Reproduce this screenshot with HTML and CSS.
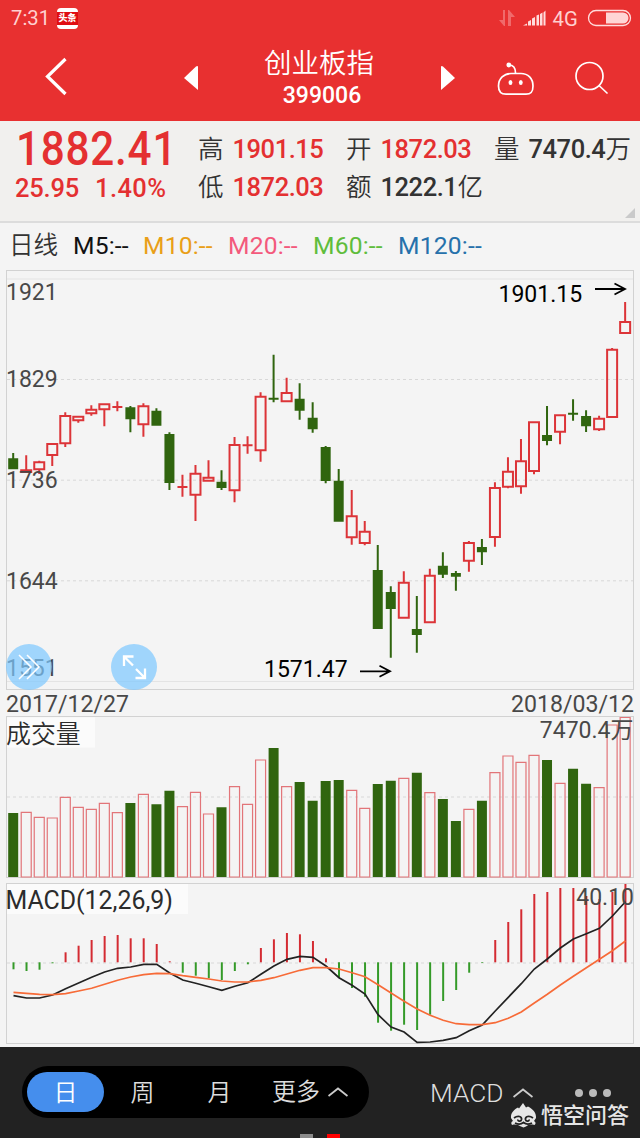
FILE: index.html
```html
<!DOCTYPE html>
<html lang="zh-CN">

<head>
    <meta charset="UTF-8">
    <meta name="viewport" content="width=device-width, initial-scale=1.0">
    <link rel="stylesheet" href="styles.css">
    <title>创业板指 399006</title>
</head>

<body>
    <div class="status">
        <span class="time">7:31</span>
        <span class="toutiao">头条</span>
        <svg class="status-icons" width="142" height="36" viewBox="498 0 142 36">
            <g fill="#f06a6b">
                <path d="M503 10h2v16h-1l-5-6h4zM508 26V10h1l6 7h-4v9z" />
            </g>
            <path fill="#ffdcdc" d="M523 25.500l4-2v2zM528 25.500v-4l3-1.500v5.500zM532 25.500v-7l3-1.500v8.500zM536.500 25.500v-10l2.500-1v11zM540 25.500V14l2.500-1.500v13zM543.500 25.500v-13l2-2v15z" />
            <text x="552.500" y="25.500">4G</text>
            <rect x="588.500" y="10.500" width="42" height="15" rx="7.500" fill="none" stroke="#ffdcdc" stroke-width="1.300" />
            <path fill="#ffd5d5" d="M606 12.500h17a5.500 5.500 0 0 1 0 11h-17z" />
        </svg>
    </div>

    <div class="header">
        <svg class="back" width="24" height="40" viewBox="44 57 24 40">
            <path d="M65.500 59L47.500 76.500L65.500 94" fill="none" stroke="#fff" stroke-width="3.200" />
        </svg>
        <svg class="prev" width="15" height="26" viewBox="0 0 15 26">
            <path d="M0 13L12 1.500Q14 .5 14 2V25Z" fill="#fff" />
        </svg>
        <div class="title">
            <p class="name">创业板指</p>
            <p class="code">399006</p>
        </div>
        <svg class="next" width="15" height="26" viewBox="0 0 15 26">
            <path d="M15 13L3 1.500Q1 .5 1 2V25Z" fill="#fff" />
        </svg>
        <svg class="robot" width="38" height="36" viewBox="496 61 38 36">
            <g fill="none" stroke="#fff" stroke-width="1.700">
                <path d="M509 65C514 65 515.500 68 515.500 73" />
                <path d="M511 73.500h10c7 0 12 5 12 12.500c0 6-2 8.200-7 8.200h-20c-5 0-7.500-2.200-7.500-8.200c0-7.500 5.500-12.500 12.500-12.500z" />
            </g>
            <g fill="#fff">
                <circle cx="508.800" cy="65" r="2.400" />
                <ellipse cx="510.500" cy="82.500" rx="1.900" ry="2.600" />
                <ellipse cx="520.800" cy="82.500" rx="1.900" ry="2.600" />
            </g>
        </svg>
        <svg class="search" width="36" height="36" viewBox="574 60 36 36">
            <g fill="none" stroke="#fff" stroke-width="1.700">
                <circle cx="589.500" cy="76" r="13.500" />
                <path d="M599 85.500L607.500 93.500" />
            </g>
        </svg>
    </div>

    <div class="quote">
        <div class="price">
            <p class="now">1882.41</p>
            <p class="change"><span>25.95</span><span>1.40%</span></p>
        </div>
        <div class="cell">高<b class="up">1901.15</b></div>
        <div class="cell">开<b class="up">1872.03</b></div>
        <div class="cell">量<b>7470.4</b>万</div>
        <div class="cell">低<b class="up">1872.03</b></div>
        <div class="cell">额<b>1222.1</b>亿</div>
        <i class="corner"></i>
    </div>

    <div class="ma">
        <span class="cycle">日线</span>
        <span class="m5">M5:--</span>
        <span class="m10">M10:--</span>
        <span class="m20">M20:--</span>
        <span class="m60">M60:--</span>
        <span class="m120">M120:--</span>
    </div>

    <div class="kline">
        <svg width="640" height="420" viewBox="0 270 640 420">
            <rect class="frame" x="6.500" y="270.500" width="627" height="419" />
            <path class="inner" d="M7 279H633M7 681.500H633" />
            <path class="dots" d="M7 379.500H633M7 480.200H633M7 580.800H633" />
            <g id="candles"></g>
            <g class="label">
                <text x="6" y="300">1921</text>
                <text x="6" y="387">1829</text>
                <text x="6" y="488">1736</text>
                <text x="6" y="589">1644</text>
                <text x="6" y="676">1551</text>
            </g>
            <g class="peak">
                <text x="498.500" y="302">1901.15</text>
                <text x="264" y="677">1571.47</text>
            </g>
            <path class="arrow" d="M595 289H625M614.500 283.500L625 289L614.500 294.500M360 671.300H390M379.500 665.800L390 671.300L379.500 676.800" />
        </svg>
        <a class="float expand">
            <svg width="46" height="46" viewBox="0 0 46 46">
                <path d="M13 11L25 23L13 35M21 11L33 23L21 35" />
            </svg>
        </a>
        <a class="float full">
            <svg width="46" height="46" viewBox="0 0 46 46">
                <path d="M22 21.500L13 12.500M13 22V12.500H22.500M25 25L34 34M24.500 34H34V24.500" />
            </svg>
        </a>
    </div>

    <div class="dates">
        <span>2017/12/27</span>
        <span>2018/03/12</span>
    </div>

    <svg class="volume" width="640" height="162" viewBox="0 716 640 162">
        <rect class="frame" x="6.500" y="716.500" width="627" height="161" />
        <rect class="tag" x="7" y="717.500" width="88" height="30" />
        <path class="dots" d="M7 797H633" />
        <g id="volumes"></g>
        <text class="name" x="6" y="743">成交量</text>
        <text class="label" x="633.500" y="738" text-anchor="end">7470.4万</text>
    </svg>

    <svg class="macd" width="640" height="162" viewBox="0 883 640 162">
        <rect class="frame" x="6.500" y="883.500" width="627" height="160" />
        <rect class="tag" x="7" y="884" width="181" height="30" />
        <path class="dots" d="M7 963H633" />
        <g id="macds"></g>
        <path id="dif" />
        <path id="dea" />
        <text class="name" x="5.500" y="909">MACD(12,26,9)</text>
        <text class="label" x="634" y="905" text-anchor="end">40.10</text>
    </svg>

    <div class="footer">
        <ul class="tabs">
            <li class="active">日</li>
            <li>周</li>
            <li>月</li>
            <li class="more">更多
                <svg width="20" height="10" viewBox="0 0 20 10">
                    <path d="M.5 9L10 1.500L19.500 9" />
                </svg>
            </li>
        </ul>
        <div class="index">MACD
            <svg width="20" height="10" viewBox="0 0 20 10">
                <path d="M.5 9L10 1.500L19.500 9" />
            </svg>
        </div>
        <div class="menu"><i></i><i></i><i></i></div>
        <div class="pager"><i></i><i class="on"></i></div>
        <div class="wukong">
            <svg width="27" height="25" viewBox="0 0 27 25">
                <path fill="#e6e6e6" d="M1 15C.5 10 4 6.500 8 4.500L9 5.500L13 0L16 4.500L18 3.500C23 6 26.500 10 26 15L24 18C26 19 26 21 24.500 22C20 21 18 22 16 23.500L13.500 24.500L11 23.500C8 22 6 21 2 22C.5 20 1.500 18.500 3 18Z" />
                <path fill="none" stroke="#222" stroke-width="1.300" d="M4 15C8 12 12 13.500 11.500 16.500C11 19 7.500 18.500 8 16.500M23 15C19 12 15 13.500 15.500 16.500C16 19 19.500 18.500 19 16.500M5 20C8 21.500 11 21.500 13.500 19.500C16 21.500 19 21.500 22 20" />
            </svg>
            <span>悟空问答</span>
        </div>
    </div>
    <script src="chart.js"></script>
</body>

</html>
```
FILE: styles.css
```css
* {
    margin: 0;
    padding: 0;
    box-sizing: border-box;
}

body {
    width: 640px;
    height: 1138px;
    overflow: hidden;
    background-color: #f4f4f4;
    font-family: Roboto, "Noto Sans CJK SC", sans-serif;
    color: #333;
}

ul {
    list-style: none;
}

i {
    display: block;
}

svg {
    display: block;
    flex: none;
}

.status {
    display: flex;
    align-items: center;
    height: 36px;
    padding-left: 11px;
    background-color: #e83030;
    color: #ffd0d0;
}

.time {
    width: 46px;
    font-size: 20.3px;
}

.toutiao {
    width: 21px;
    height: 21px;
    border: solid #fff;
    border-width: 4px 0;
    border-radius: 4px;
    background-color: #e00d12;
    color: #fff;
    font-size: 9px;
    font-weight: 900;
    line-height: 13px;
    text-align: center;
}

.status-icons {
    margin-left: auto;
}

.status-icons text {
    font-size: 20.3px;
    fill: #ffd0d0;
}

.header {
    display: flex;
    height: 85px;
    background-color: #e83030;
    color: #fff;
}

.back {
    margin: 21px 0 0 44px;
}

.prev {
    margin: 29px 0 0 116px;
}

.title {
    width: 236px;
    text-align: center;
}

.title .name {
    height: 42px;
    padding: 8px 0 0 4px;
    font-size: 27.5px;
    font-weight: 350;
    line-height: 40px;
}

.code {
    padding-left: 10px;
    font-size: 23px;
    font-weight: 500;
    line-height: 36px;
}

.next {
    margin: 29px 0 0 5px;
}

.robot {
    margin: 25px 0 0 41px;
}

.search {
    margin: 24px 0 0 40px;
}

.quote {
    position: relative;
    display: grid;
    grid-template-columns: 183px 148px 148px 1fr;
    grid-template-rows: 38px 38px;
    height: 102px;
    padding: 9px 0 0 15px;
    border-bottom: 2px solid #dcdcdc;
    background-color: #f1f0ee;
}

.price {
    grid-row: 1 / 3;
    color: #e43031;
    font-weight: 500;
}

.now {
    height: 39px;
    padding-left: 1px;
    font-size: 48px;
    letter-spacing: .9px;
    line-height: 38px;
    transform: scaleX(.88);
    transform-origin: left;
}

.change {
    display: flex;
    gap: 16px;
    font-size: 25.5px;
    letter-spacing: -.2px;
    line-height: 39px;
}

.change span + span {
    letter-spacing: .4px;
}

.cell {
    display: flex;
    font-size: 25.5px;
    font-weight: 350;
    line-height: 38px;
    white-space: nowrap;
}

.cell b {
    margin-left: 9px;
    font-weight: 500;
    letter-spacing: -.45px;
}

.cell .up {
    color: #e43031;
}

.corner {
    position: absolute;
    right: 5px;
    bottom: 3px;
    border-left: 10px solid transparent;
    border-bottom: 10px solid #cacaca;
}

.ma {
    display: flex;
    height: 47px;
    padding-left: 9px;
    font-size: 24.6px;
    line-height: 46px;
}

.cycle {
    width: 64px;
    font-weight: 350;
}

.m5 {
    width: 70px;
    color: #111;
    letter-spacing: .2px;
}

.m10 {
    width: 85px;
    color: #e99f18;
    letter-spacing: .2px;
}

.m20 {
    width: 85px;
    color: #f3597c;
    letter-spacing: .2px;
}

.m60 {
    width: 85px;
    color: #5fbd3c;
    letter-spacing: .2px;
}

.m120 {
    color: #2671ab;
    letter-spacing: .2px;
}

.kline {
    position: relative;
    height: 420px;
}

.frame {
    fill: none;
    stroke: #d2d2d2;
}

.inner {
    stroke: #e4e4e4;
}

.dots {
    stroke: #d8d8d8;
    stroke-dasharray: 3 3;
}

.tag {
    fill: #fbfbfb;
}

.label {
    font-size: 23px;
    fill: #484848;
}

.volume .name,
.macd .name {
    font-size: 24.9px;
    fill: #2c2c2c;
}

.volume .name {
    font-weight: 350;
}

.peak {
    font-size: 23px;
    fill: #000;
}

.arrow {
    fill: none;
    stroke: #000;
    stroke-width: 1.8;
}

.rise {
    fill: none;
    stroke: #dc3438;
    stroke-width: 2;
}

.fall {
    fill: #30650f;
    stroke: #30650f;
    stroke-width: 2;
}

#volumes .rise {
    stroke: #e27579;
    stroke-width: 1.2;
}

#macds .rise {
    stroke: #d42b32;
}

#macds .fall {
    stroke: #349a28;
}

#dif,
#dea {
    fill: none;
    stroke: #222;
    stroke-width: 1.7;
}

#dea {
    stroke: #f76b38;
}

.float {
    position: absolute;
    top: 374px;
    width: 46px;
    height: 46px;
    border-radius: 50%;
    background-color: rgba(124, 200, 255, .7);
}

.float path {
    fill: none;
    stroke: #fff;
    stroke-width: 2.3;
}

.expand {
    left: 6px;
}

.expand path {
    stroke-width: 1.5;
}

.full {
    left: 111px;
}

.dates {
    display: flex;
    justify-content: space-between;
    height: 26px;
    padding: 0 6px;
    color: #484848;
    font-size: 23.1px;
    line-height: 29px;
}

.macd {
    margin-top: 5px;
}

.footer {
    position: relative;
    display: flex;
    height: 93px;
    margin-top: 2px;
    padding: 19px 0 0 22px;
    background-color: #222;
    color: #ddd;
    font-size: 24px;
    font-weight: 350;
}

.footer path {
    stroke-width: 1.8;
}

.tabs {
    display: flex;
    width: 347px;
    height: 52px;
    padding: 6px 5px;
    border-radius: 26px;
    background-color: #000;
    line-height: 42px;
}

.tabs li {
    width: 77px;
    text-align: center;
}

.tabs .active {
    border-radius: 20px;
    background-color: #458eed;
    color: #fff;
}

.tabs .more {
    display: flex;
    align-items: center;
    gap: 8px;
    width: 90px;
    padding-left: 14px;
    white-space: nowrap;
}

.more path,
.index path {
    fill: none;
    stroke: #ccc;
}

.index {
    display: flex;
    align-items: center;
    gap: 9px;
    width: 145px;
    height: 54px;
    margin-left: 61px;
    font-size: 26.3px;
}

.menu {
    display: flex;
    gap: 6px;
    margin: 23px 0 0 0;
}

.menu i {
    width: 8px;
    height: 8px;
    border-radius: 50%;
    background-color: #bbb;
}

.pager {
    position: absolute;
    left: 300px;
    bottom: 0;
    display: flex;
    gap: 14px;
}

.pager i {
    width: 13px;
    height: 6px;
    background-color: #8b8b8b;
}

.pager .on {
    background-color: #f00;
}

.wukong {
    position: absolute;
    right: 11px;
    bottom: 9px;
    display: flex;
    align-items: center;
    gap: 4px;
    color: #e6e6e6;
    font-size: 22px;
    font-weight: 500;
    line-height: 30px;
}

.wukong svg {
    margin-bottom: 2px;
}
```
FILE: chart.js
```js
// [涨跌, 最高, 实体上沿, 实体下沿, 最低, 成交量柱顶, MACD柱端, DIF, DEA]
const data = [
    [0, 453, 458.3, 469.3, 469.3, 813, 969.3, 995.7, 992.3],
    [1, 455.3, 470.3, 472, 472, 812.3, 971, 998, 993.3],
    [1, 460.7, 462.3, 469.3, 474, 817.3, 969.7, 998, 994.3],
    [1, 444, 444, 455, 466, 818, 963.3, 995, 994.7],
    [1, 412.3, 416, 443.3, 447, 797.3, 952.3, 988.7, 993.7],
    [1, 416.7, 416.7, 420.3, 422.7, 807.3, 945.7, 983, 991],
    [1, 405.3, 409.7, 413.3, 415.7, 809.3, 940, 977.3, 988.3],
    [1, 404.3, 404.3, 409.3, 426.3, 803.3, 936, 972, 984.3],
    [1, 401.3, 407, 407, 411.3, 812.7, 935, 968.3, 980.3],
    [0, 406, 407.3, 419.3, 432.3, 803, 938.3, 967, 977],
    [1, 403.3, 406.3, 424.3, 436.7, 794.3, 938.3, 964.3, 974.7],
    [0, 408.3, 410.7, 425.7, 425.7, 804.3, 944, 964.3, 973.3],
    [0, 432.3, 434, 483, 490, 790.7, 961.3, 973, 973.7],
    [1, 474.7, 487, 487, 496.7, 806.7, 972.7, 980, 975.7],
    [1, 465, 473.7, 494.7, 521, 792.3, 975.7, 983.3, 977.3],
    [1, 460.3, 477.7, 480.7, 480.7, 814, 978.3, 986.7, 979],
    [0, 470.3, 481.7, 488, 490, 807.3, 980, 990.3, 981],
    [1, 437, 445, 490.3, 502.3, 786.7, 971, 986.3, 982],
    [1, 436.3, 445.3, 445.3, 453.7, 804.3, 964.3, 982.7, 982],
    [1, 392.3, 396.7, 450.3, 461.7, 760, 948, 974.3, 980.3],
    [0, 354.7, 398.7, 398.7, 402.3, 748, 939.3, 966, 977.7],
    [1, 377.7, 393, 401.3, 401.3, 786.7, 933, 959.3, 974],
    [0, 383.3, 398.7, 410.7, 419.7, 782, 934.3, 956.3, 970.3],
    [0, 402.3, 417.7, 429.3, 432.7, 800.7, 941, 957.3, 967.7],
    [0, 446, 447, 481, 483.3, 781, 958.3, 966, 967.7],
    [0, 469, 480.7, 521.7, 521.7, 780, 977.7, 977.7, 969],
    [1, 490, 516.3, 537.3, 544.7, 790.3, 988, 985.3, 972.7],
    [1, 521, 531.7, 543, 545.3, 808.3, 996.7, 994, 976.7],
    [0, 545, 570, 629, 629, 784, 1022.7, 1014.7, 984.7],
    [0, 586.3, 592, 609, 657.7, 780.7, 1030.7, 1027, 993],
    [1, 571.3, 582.7, 617.7, 617.7, 778.3, 1024.7, 1032, 1001.3],
    [0, 596, 629, 635, 652.7, 772.7, 1030, 1042.3, 1009],
    [1, 568.7, 575.7, 622.3, 622.3, 792.7, 1014.7, 1042, 1015.3],
    [0, 552.3, 565.7, 574.7, 578, 799, 1001, 1040.3, 1020.3],
    [0, 571, 574, 575.7, 590.7, 821, 990, 1037.7, 1023.7],
    [1, 541, 543, 560.7, 571.7, 809.3, 972.7, 1030.7, 1024.7],
    [0, 539, 547, 552.3, 565, 800.7, 963, 1025, 1024.7],
    [1, 482.3, 488, 537, 546.7, 772.7, 940, 1011, 1022.7],
    [1, 457.3, 471.7, 486.7, 488.3, 756, 922, 997.3, 1018.3],
    [1, 439, 461.3, 486.3, 493.7, 762.3, 909.3, 983.7, 1012],
    [1, 422.3, 422.3, 471, 474.3, 755.3, 894, 969, 1003],
    [0, 406, 435, 441, 445.3, 760, 892, 959, 994.3],
    [1, 415.3, 415.3, 431.7, 444.3, 783.3, 888, 948, 985],
    [0, 399.3, 413.7, 413.7, 420.7, 768.7, 888, 939, 976.3],
    [0, 410.3, 416, 426.3, 432, 783.7, 896, 933.7, 967.7],
    [1, 415.7, 418.7, 429.3, 431, 787.7, 899, 928.3, 959.3],
    [1, 348, 349.7, 417, 417, 725, 892, 916, 950.7],
    [1, 302, 322, 333, 333, 717.5, 884, 901.7, 941]
]

const candles = document.getElementById("candles"),
    volumes = document.getElementById("volumes"),
    macds = document.getElementById("macds")
const zero = 962.3,
    bottom = 877
let dif = "",
    dea = ""

function add(parent, d, className) {
    const path = document.createElementNS("http://www.w3.org/2000/svg", "path")
    path.setAttribute("d", d)
    path.setAttribute("class", className)
    parent.appendChild(path)
}

data.forEach(([up, high, open, close, low, vol, bar, a, b], i) => {
    const x = 13.2 + 13.02 * i
    const color = up ? "rise" : "fall"
    // 绿色实心柱的描边收在实体内
    const pad = up || close - open < 2 ? 0 : 1
    const w = up ? 5 : 4
    let d = `M${x} ${high}V${open}M${x} ${close}V${low}`
    if (open === close) {
        d += `M${x - 5} ${open}H${x + 5}`
    } else {
        d += `M${x - w} ${open + pad}H${x + w}V${close - pad}H${x - w}Z`
    }
    add(candles, d, color)
    add(volumes, `M${x - w} ${vol + (up ? 0 : 1)}H${x + w}V${bottom - (up ? 0 : 1)}H${x - w}Z`, color)
    add(macds, `M${x + .3} ${zero}V${bar}`, bar < zero ? "rise" : "fall")
    dif += (i ? "L" : "M") + (x + .3) + " " + a
    dea += (i ? "L" : "M") + (x + .3) + " " + b
})
document.getElementById("dif").setAttribute("d", dif)
document.getElementById("dea").setAttribute("d", dea)
```
